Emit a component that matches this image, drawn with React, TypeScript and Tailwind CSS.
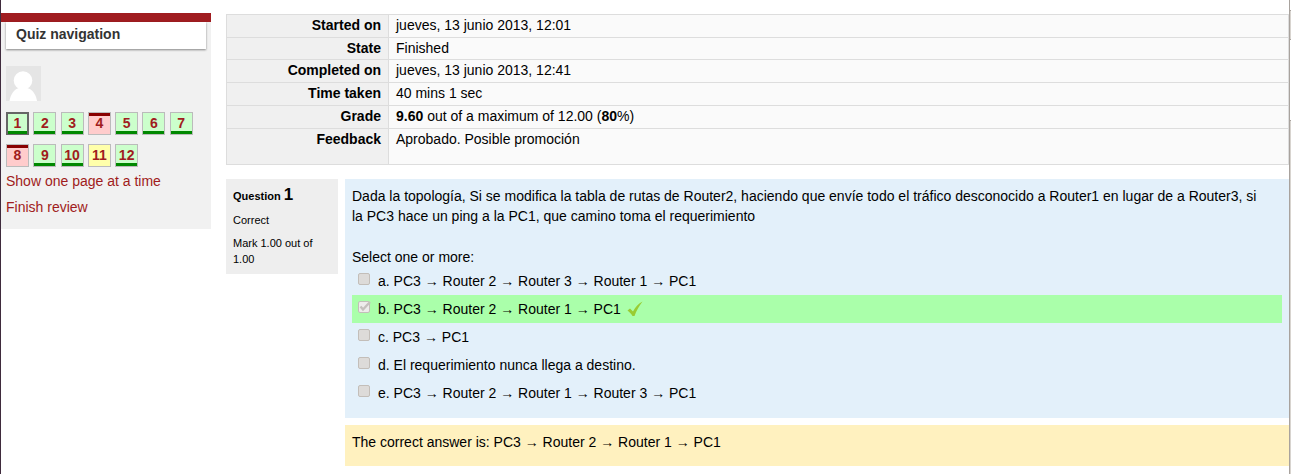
const NAV_ITEMS = [
  { n: 1, state: 'correct', current: true },
  { n: 2, state: 'correct' },
  { n: 3, state: 'correct' },
  { n: 4, state: 'incorrect' },
  { n: 5, state: 'correct' },
  { n: 6, state: 'correct' },
  { n: 7, state: 'correct' },
  { n: 8, state: 'incorrect' },
  { n: 9, state: 'correct' },
  { n: 10, state: 'correct' },
  { n: 11, state: 'partial' },
  { n: 12, state: 'correct' },
];

const ANSWERS = [
  { id: 'a', text: 'PC3 → Router 2 → Router 3 → Router 1 → PC1' },
  { id: 'b', text: 'PC3 → Router 2 → Router 1 → PC1', chosen: true },
  { id: 'c', text: 'PC3 → PC1' },
  { id: 'd', text: 'El requerimiento nunca llega a destino.' },
  { id: 'e', text: 'PC3 → Router 2 → Router 1 → Router 3 → PC1' },
];

const SUMMARY = [
  { label: 'Started on', value: 'jueves, 13 junio 2013, 12:01', height: 'h-[23px]' },
  { label: 'State', value: 'Finished', height: 'h-[22px]' },
  { label: 'Completed on', value: 'jueves, 13 junio 2013, 12:41', height: 'h-[23px]' },
  { label: 'Time taken', value: '40 mins 1 sec', height: 'h-[23px]' },
  {
    label: 'Grade',
    value: (
      <>
        <b>9.60</b> out of a maximum of 12.00 (<b>80</b>%)
      </>
    ),
    height: 'h-[23px]',
  },
  { label: 'Feedback', value: 'Aprobado. Posible promoción', height: 'h-9' },
];

const NAV_COLORS: Record<string, string> = {
  correct: 'bg-[#ccffcc]',
  incorrect: 'bg-[#ffcccc]',
  partial: 'bg-[#ffffaa]',
};

const NAV_BARS: Record<string, string> = {
  correct: 'border-b-3 border-[#008800] leading-[21px]',
  incorrect: 'border-t-3 border-[#880000] leading-[15px]',
  partial: 'leading-[21px]',
};

function Avatar() {
  return (
    <svg viewBox="0 0 35 35" className="block size-[35px]" aria-hidden="true">
      <rect width="35" height="35" fill="#e5e5e5" />
      <circle cx="17" cy="14.5" r="9.3" fill="#fff" />
      <path d="M3.500 35C4.500 28 9 22.500 13 22h8c4.500.5 9 6 10 13z" fill="#fff" />
    </svg>
  );
}

function QuizNavigation() {
  return (
    <nav className="w-[210px] shrink-0 self-start border-t-9 border-[#a01c20] bg-[#f1f1f1] px-[5px] pb-3">
      <h2 className="h-[27px] bg-white pl-2.5 font-bold leading-6 text-[#333] shadow-[0_1px_2px_rgba(0,0,0,0.45)]">
        Quiz navigation
      </h2>
      <div className="pt-[17px] pb-[11px]">
        <Avatar />
      </div>
      <div className="grid w-[191px] grid-cols-7 gap-y-[9px] font-bold">
        {NAV_ITEMS.map(({ n, state, current }) => (
          <a
            key={n}
            href={`#q${n}`}
            className={`flex size-[23px] ${NAV_COLORS[state]} ${current ? 'border-2 border-[#666]' : 'border border-[#bbb]'}`}
          >
            <span className={`flex flex-1 justify-center ${current ? '-my-px' : ''} ${NAV_BARS[state]}`}>{n}</span>
          </a>
        ))}
      </div>
      <div className="flex flex-col items-start gap-1.5 pt-1">
        <a href="#all">Show one page at a time</a>
        <a href="#finish">Finish review</a>
      </div>
    </nav>
  );
}

function AttemptSummary() {
  return (
    <table className="w-full border-collapse border border-[#ddd]">
      <tbody>
        {SUMMARY.map(({ label, value, height }) => (
          <tr key={label} className={`border-b border-[#ddd] align-top ${height}`}>
            <th scope="row" className="w-[162px] border-r border-[#ddd] bg-[#f0f0f0] pr-[7px] text-right font-bold">
              {label}
            </th>
            <td className="bg-[#fafafa] pl-[7px]">{value}</td>
          </tr>
        ))}
      </tbody>
    </table>
  );
}

function Tick() {
  return (
    <svg viewBox="0 0 16 16" className="ml-1.5 size-4" role="img" aria-label="Correct">
      <path d="M.5 9.500 3 7.500 6 10.500C8.500 6 11.500 2.500 15.500.5 12 5 9.500 9.500 7.500 15H5.500C4 12.500 2.500 11 .5 9.500z" fill="#99cc33" />
    </svg>
  );
}

function Answer({ id, text, chosen }: { id: string; text: string; chosen?: boolean }) {
  return (
    <div className={`flex h-7 items-center pl-1.5 ${chosen ? 'bg-[#aaffaa]' : ''}`}>
      <span className="mb-1 grid size-3">
        <input
          id={`answer-${id}`}
          type="checkbox"
          disabled
          defaultChecked={chosen}
          className="col-start-1 row-start-1 size-3 appearance-none rounded-xs border border-[#c3beb9] bg-[#dddbd9] checked:bg-[#eeeceb]"
        />
        {chosen && (
          <svg viewBox="0 0 12 12" className="col-start-1 row-start-1 size-3 overflow-visible" aria-hidden="true">
            <path d="M2.500 5.500 5 8.500 12 1" fill="none" stroke="#c4c0bc" strokeWidth="2.4" />
          </svg>
        )}
      </span>
      <label htmlFor={`answer-${id}`} className="pl-2">
        {id}. {text}
      </label>
      {chosen && <Tick />}
    </div>
  );
}

function Question() {
  return (
    <section className="flex items-start gap-[7px]">
      <div className="flex w-28 shrink-0 flex-col gap-[7px] bg-[#eee] p-[7px] text-[11px] leading-4">
        <h3 className="font-bold leading-[17px]">
          Question <span className="text-[17px]">1</span>
        </h3>
        <p>Correct</p>
        <p>Mark 1.00 out of 1.00</p>
      </div>
      <div className="flex min-w-0 flex-1 flex-col gap-[7px]">
        <div className="bg-[#e3f0fa] px-[7px] pt-[7px] pb-[11px]">
          <p className="pr-4">
            Dada la topología, Si se modifica la tabla de rutas de Router2, haciendo que envíe todo el tráfico
            desconocido a Router1 en lugar de a Router3, si la PC3 hace un ping a la PC1, que camino toma el
            requerimiento
          </p>
          <fieldset>
            <legend className="pt-[21px]">Select one or more:</legend>
            {ANSWERS.map((answer) => (
              <Answer key={answer.id} {...answer} />
            ))}
          </fieldset>
        </div>
        <div className="bg-[#fff1bf] px-[7px] pt-[7px] pb-3.5">
          The correct answer is: PC3 → Router 2 → Router 1 → PC1
        </div>
      </div>
    </section>
  );
}

function WindowEdge() {
  return (
    <div className="flex w-0.5 shrink-0 flex-col border-l border-[#a8a29d] bg-[#d8d4cf]">
      <div className="h-2.5 bg-white" />
      <div className="h-[30px] border-y border-[#a8a29d]" />
      <div className="h-20 bg-white" />
      <div className="h-px bg-[#a8a29d]" />
    </div>
  );
}

export default function App() {
  return (
    <div className="flex min-h-screen border-l border-[#3f2b3d] bg-white font-['Liberation_Sans',Arial,sans-serif] text-sm leading-5 text-black [&_nav_a]:text-[#a01c20]">
      <div className="flex min-w-0 flex-1 gap-[15px] pt-[13px]">
        <QuizNavigation />
        <main className="flex min-w-0 flex-1 flex-col gap-3.5 pt-px">
          <AttemptSummary />
          <Question />
        </main>
      </div>
      <WindowEdge />
    </div>
  );
}
